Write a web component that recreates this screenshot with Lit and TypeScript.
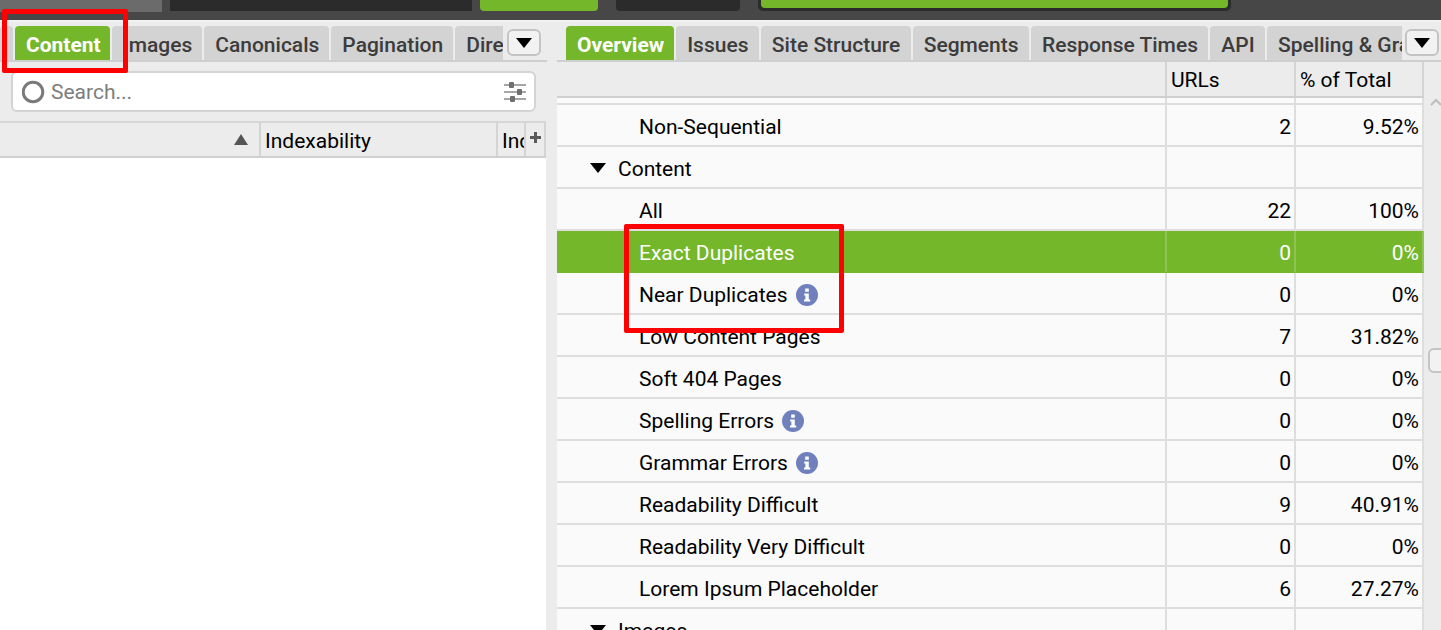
import { LitElement, html, css, svg } from "lit";
import { customElement } from "lit/decorators.js";

type Row = { name: string; urls?: string; pct?: string; info?: boolean; group?: boolean; sel?: boolean };

const ROWS: Row[] = [
  { name: "Non-Sequential", urls: "2", pct: "9.52%" },
  { name: "Content", group: true },
  { name: "All", urls: "22", pct: "100%" },
  { name: "Exact Duplicates", urls: "0", pct: "0%", sel: true },
  { name: "Near Duplicates", urls: "0", pct: "0%", info: true },
  { name: "Low Content Pages", urls: "7", pct: "31.82%" },
  { name: "Soft 404 Pages", urls: "0", pct: "0%" },
  { name: "Spelling Errors", urls: "0", pct: "0%", info: true },
  { name: "Grammar Errors", urls: "0", pct: "0%", info: true },
  { name: "Readability Difficult", urls: "9", pct: "40.91%" },
  { name: "Readability Very Difficult", urls: "0", pct: "0%" },
  { name: "Lorem Ipsum Placeholder", urls: "6", pct: "27.27%" },
  { name: "Images", group: true },
];

const LEFT_TABS = ["", "Content", "Images", "Canonicals", "Pagination", "Directives"];
const RIGHT_TABS = ["Overview", "Issues", "Site Structure", "Segments", "Response Times", "API", "Spelling & Grammar"];

const infoIcon = svg`<svg class="info" width="22" height="22" viewBox="0 0 22 22"><circle cx="11" cy="11" r="11" fill="#6f80bd"/><path d="M9.2 4.6h3.6v3.2H9.2zM8.2 9.4h4.6v6h1.4v2.2H8v-2.2h1.4v-3.8H8.2z" fill="#fff"/></svg>`;

@customElement("app-root")
export class AppRoot extends LitElement {
  static styles = css`
    :host {
      display: block;
      position: relative;
      width: 1441px;
      height: 630px;
      overflow: hidden;
      background: #ececec;
      font-family: Roboto, "Liberation Sans", sans-serif;
      font-size: 21px;
      color: #000;
    }
    .top {
      display: flex;
      height: 20px;
      background: #474747;
      align-items: flex-start;
    }
    .t1 { width: 162px; height: 12px; background: #6b6b6b; margin-right: 8px; }
    .t2 { width: 302px; height: 11px; background: #2b2b2b; margin-right: 8px; }
    .t3 { width: 118px; height: 11px; background: #74b72b; border-radius: 0 0 4px 4px; margin-right: 18px; }
    .t4 { width: 124px; height: 11px; background: #2b2b2b; border-radius: 0 0 4px 4px; margin-right: 18px; }
    .t5 { width: 473px; height: 11px; background: #2b2b2b; border-radius: 0 0 5px 5px; padding: 0 3px; box-sizing: border-box; }
    .t5 div { height: 8px; background: #74b72b; border-radius: 0 0 4px 4px; }
    .sub { height: 2px; background: #f2f2f2; }
    .panes { display: flex; height: 608px; }
    .left { width: 547px; flex: none; display: flex; flex-direction: column; }
    .right { flex: 1; margin-left: 10px; display: flex; flex-direction: column; min-width: 0; }
    .tabbar {
      position: relative;
      height: 40px;
      box-sizing: border-box;
      flex: none;
      padding-top: 4px;
      border-bottom: 2px solid #cfcfcf;
      display: flex;
    }
    .tabs { display: flex; gap: 2px; overflow: hidden; height: 34px; }
    .left .tabs { width: 503px; }
    .right .tabs { width: 845px; padding-left: 9px; box-sizing: border-box; }
    .tab {
      flex: none;
      height: 34px;
      box-sizing: border-box;
      padding: 0 10.4px 0 11px;
      line-height: 38px;
      font-weight: 500;
      color: #3c3c3c;
      background: #d3d3d3;
      border-radius: 4px 4px 0 0;
      white-space: nowrap;
    }
    .left .tab { padding-right: 10px; }
    .tab.stub { width: 13px; padding: 0; }
    .tab.on { background: #74b72b; color: #fff; font-weight: 700; padding-right: 10px; }
    .left .tab.on { padding-right: 9px; }
    .more {
      position: absolute;
      top: 7px;
      width: 34px;
      height: 27px;
      box-sizing: border-box;
      border: 2px solid #c4c4c4;
      border-radius: 6px;
      background: #f2f2f2;
      display: flex;
      align-items: center;
      justify-content: center;
    }
    .left .more { left: 507px; }
    .right .more { left: 848px; }
    .search {
      margin: 9px 11px 0 11px;
      height: 41px;
      flex: none;
      box-sizing: border-box;
      border: 2px solid #d4d4d4;
      border-radius: 6px;
      background: #fff;
      display: flex;
      align-items: center;
      padding: 0 8px 0 9px;
      color: #7d7d7d;
    }
    .search span { flex: 1; margin-left: 5px; }
    .lhead {
      margin-top: 9px;
      height: 37px;
      flex: none;
      box-sizing: border-box;
      border-top: 2px solid #d6d6d6;
      border-bottom: 2px solid #cfcfcf;
      display: grid;
      grid-template-columns: 261px 237px 28px 20px;
      width: 546px;
    }
    .lhead > div {
      box-sizing: border-box;
      border-right: 2px solid #d4d4d4;
      padding-left: 4px;
      overflow: hidden;
      white-space: nowrap;
      display: flex;
      align-items: center;
    }
    .lhead > div.txt { padding-top: 2px; }
    .lhead > div.sort { justify-content: flex-end; padding-right: 11px; padding-bottom: 1px; }
    .lhead > div.add { padding-left: 4px; padding-bottom: 5px; }
    .lbody { flex: 1; width: 546px; background: #fff; }
    .rmain { display: flex; flex: 1; min-height: 0; }
    .table { width: 867px; flex: none; overflow: hidden; }
    .grid { display: grid; grid-template-columns: 610px 129px 128px; }
    .head {
      height: 36px;
      border-bottom: 2px solid #cfcfcf;
      box-sizing: border-box;
    }
    .head > div {
      box-sizing: border-box;
      height: 34px;
      border-right: 2px solid #d4d4d4;
      padding: 0 0 0 4px;
      line-height: 36px;
    }
    .strip { height: 7px; background: #fafafa; border-bottom: 2px solid #dedede; box-sizing: border-box; }
    .strip > div { border-right: 2px solid #dedede; box-sizing: border-box; }
    .row { height: 42px; background: #fafafa; }
    .row > div {
      box-sizing: border-box;
      height: 42px;
      border-right: 2px solid #dedede;
      border-bottom: 2px solid #dedede;
      line-height: 44px;
      white-space: nowrap;
    }
    .row .num { text-align: right; padding-right: 3px; }
    .row .name { padding-left: 82px; display: flex; align-items: center; padding-top: 4px; }
    .row .name.group { padding-left: 33px; }
    .row .name .tri { margin-right: 12px; margin-top: -6px; }
    .info { margin-left: 8px; margin-top: -1px; flex: none; }
    .row.sel { background: #74b72b; color: #fff; }
    .row.sel > div { border-bottom-color: #74b72b; border-right-color: #8ec455; }
    .scroll { flex: 1; padding-top: 36px; position: relative; }
    .arrow { display: block; margin: 0 0 0 6px; }
    .thumb {
      width: 20px;
      height: 25px;
      margin: 242px 0 0 4px;
      box-sizing: border-box;
      border: 2px solid #c4c4c4;
      border-radius: 6px;
      background: #f2f2f2;
    }
    .mark {
      position: absolute;
      box-sizing: border-box;
      border: 5px solid #fe0000;
      border-radius: 2px;
      pointer-events: none;
    }
    .m1 { left: 2px; top: 9px; width: 126px; height: 64px; }
    .m2 { left: 624px; top: 224px; width: 220px; height: 109px; }
  `;

  private caret() {
    return svg`<svg width="16" height="10" viewBox="0 0 16 10"><path d="M0 0h16L8 10z" fill="#000"/></svg>`;
  }

  render() {
    return html`
      <div class="top">
        <div class="t1"></div><div class="t2"></div><div class="t3"></div><div class="t4"></div>
        <div class="t5"><div></div></div>
      </div>
      <div class="sub"></div>
      <div class="panes">
        <section class="left">
          <div class="tabbar">
            <div class="tabs">
              ${LEFT_TABS.map((t, i) => html`<div class="tab ${i === 0 ? "stub" : ""} ${i === 1 ? "on" : ""}">${t}</div>`)}
            </div>
            <div class="more">${this.caret()}</div>
          </div>
          <div class="search">
            <svg width="24" height="24" viewBox="0 0 24 24"><circle cx="11" cy="12" r="9.8" fill="none" stroke="#7a7a7a" stroke-width="3"/></svg>
            <span>Search...</span>
            <svg width="22" height="20" viewBox="0 0 22 20">
              <path d="M0 3h22M0 10h22M0 17h22" stroke="#8a8a8a" stroke-width="1.6"/>
              <rect x="5" y="0" width="5" height="6" rx="1" fill="#6f6f6f"/>
              <rect x="13" y="7" width="5" height="6" rx="1" fill="#6f6f6f"/>
              <rect x="6" y="14" width="5" height="6" rx="1" fill="#6f6f6f"/>
            </svg>
          </div>
          <div class="lhead">
            <div class="sort"><svg width="14" height="11" viewBox="0 0 14 11"><path d="M7 0l7 11H0z" fill="#555"/></svg></div>
            <div class="txt">Indexability</div>
            <div class="txt">Indexability Status</div>
            <div class="add"><svg width="11" height="11" viewBox="0 0 11 11"><path d="M4 0h3v4h4v3H7v4H4V7H0V4h4z" fill="#5a5a5a"/></svg></div>
          </div>
          <div class="lbody"></div>
        </section>
        <section class="right">
          <div class="tabbar">
            <div class="tabs">
              ${RIGHT_TABS.map((t, i) => html`<div class="tab ${i === 0 ? "on" : ""}">${t}</div>`)}
            </div>
            <div class="more">${this.caret()}</div>
          </div>
          <div class="rmain">
            <div class="table">
              <div class="grid head"><div></div><div>URLs</div><div>% of Total</div></div>
              <div class="grid strip"><div></div><div></div><div></div></div>
              ${ROWS.map(
                (r) => html`<div class="grid row ${r.sel ? "sel" : ""}">
                  <div class="name ${r.group ? "group" : ""}">
                    ${r.group ? html`<span class="tri">${this.caret()}</span>` : ""}
                    ${r.name}${r.info ? infoIcon : ""}
                  </div>
                  <div class="num">${r.urls ?? ""}</div>
                  <div class="num">${r.pct ?? ""}</div>
                </div>`
              )}
            </div>
            <div class="scroll">
              <svg class="arrow" width="12" height="8" viewBox="0 0 12 8"><path d="M1 7l5-5 5 5" fill="none" stroke="#bdbdbd" stroke-width="2"/></svg>
              <div class="thumb"></div>
            </div>
          </div>
        </section>
      </div>
      <div class="mark m1"></div>
      <div class="mark m2"></div>
    `;
  }
}
